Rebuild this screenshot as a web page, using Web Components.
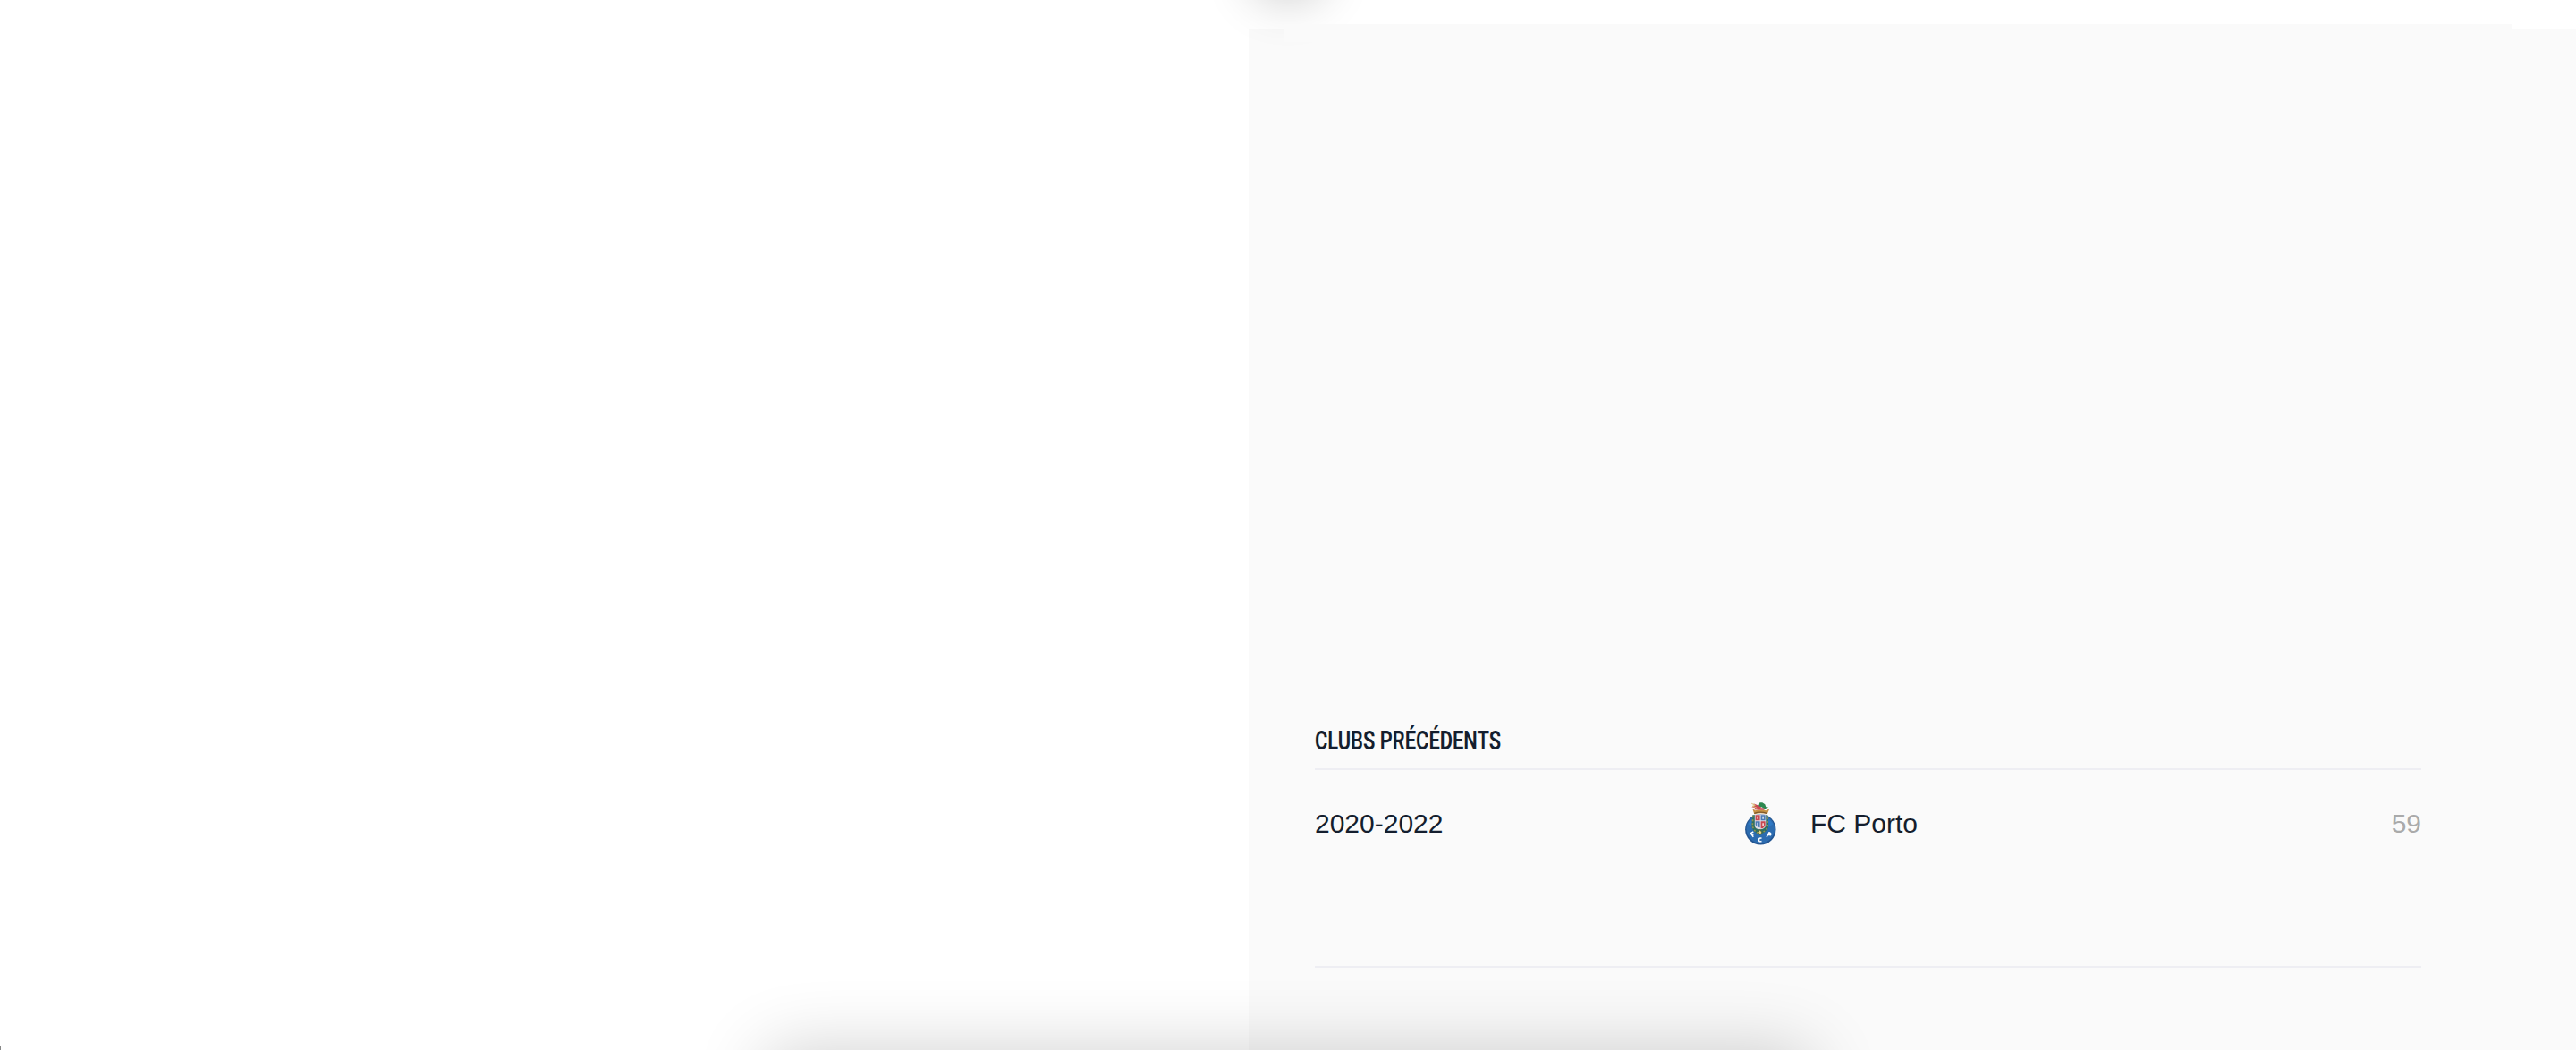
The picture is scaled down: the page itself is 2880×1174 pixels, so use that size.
<!DOCTYPE html>
<html lang="fr"><head><meta charset="utf-8"><title>Clubs précédents</title>
<style>html,body{margin:0;background:#fff}body{width:2880px;height:1174px;overflow:hidden}</style></head><body>
<player-page></player-page>
<script>
const define=(name,html)=>customElements.define(name,class extends HTMLElement{
 constructor(){super();this.attachShadow({mode:'open'}).innerHTML=html;}
});
define('club-crest',`<style>:host{display:block;width:36px;height:49px}svg{display:block}</style>
<svg width="36" height="49" viewBox="0.7 0.7 36 49">
<circle cx="18" cy="31" r="17.200" fill="#235592"/><circle cx="18" cy="30.500" r="15.800" fill="#2c6cb0"/>
<path d="M4 25Q9 17 18 16Q27 17 32 25Q26 30 18 31Q10 30 4 25" fill="#2e78c4"/>
<path d="M9 15L8 27Q8 33 17 37Q27 33 27 27L26 15Z" fill="#2f6f62"/>
<path d="M9.500 16L9 27Q10 33 17 36Q25 33 26 27L25.500 16" fill="none" stroke="#93924d" stroke-width="1.600" stroke-dasharray="2 2"/>
<path d="M11.500 14H24V27Q22 31 17.700 31Q12 31 11.500 27Z" fill="#dddce6"/>
<path d="M12.300 15h5v6h-5zM18.300 22h5v5q-2 3-5 3z" fill="#c94750"/>
<path d="M18.300 15h5v6h-5zM12.300 22h5v7q-4-1-5-3z" fill="#4a79b4"/>
<path d="M14 16.500h1.700v3H14zM20 24h1.700v3H20z" fill="#f0cfcf"/><path d="M20.800 16.500v3M14.800 23.500v4" stroke="#dfeaf4" stroke-width="1.500"/>
<path d="M9 8L12 10Q18 8 24 10L28 8L25.500 14Q18 12 11 14Z" fill="#c89243"/>
<path d="M11 13Q18 10.500 25 13" fill="none" stroke="#7e5a2e" stroke-width="1.300"/>
<path d="M8 6L12 4.500L10 2L15 4L20 4L18 7L23 7L22 9.500L10 9L12 7Z" fill="#cb4855"/>
<path d="M16 5L17 1L20 1L23 3L24 6L27 6L23 8L19 6Z" fill="#2e8850"/><path d="M8 2l4 2-3 1 5 2" fill="none" stroke="#d8bc72"/>
<path d="M17.500 31l2 3.500-2 3-2-3z" fill="#e5d58e" stroke="#4e663d"/>
<path d="M10 39.500L7 35.500L10 33.500M8.300 37.300l2.300-1.300" fill="none" stroke="#fff" stroke-width="1.500"/>
<path d="M19.200 41q-3-1-3 1.700t3 1.500" fill="none" stroke="#fff" stroke-width="1.500"/>
<path d="M24.800 39.500l2.800-5q3 1 1.500 3l-2.800-.5" fill="none" stroke="#fff" stroke-width="1.500"/>
</svg>`);
define('section-title',`<style>:host{display:block;height:53px;padding-top:5px;box-sizing:border-box}h2{margin:0;font:600 29.500px/35px Roboto,sans-serif;width:max-content;transform:scaleX(.742);transform-origin:left}</style><h2><slot></slot></h2>`);
define('club-row',`<style>:host{display:grid;grid-template-columns:481px 73px 1fr auto;height:223px;align-items:start;border-top:2px solid #eeeef3;border-bottom:2px solid #eeeef3;box-sizing:border-box;font:30px/34px "Liberation Sans",sans-serif}
.text{padding-top:43px}.crest{padding-top:36px}.apps{color:#aaa}</style>
<span class="text"><slot name="years"></slot></span><span class="crest"><slot name="crest"></slot></span><span class="text"><slot></slot></span><span class="text apps"><slot name="apps"></slot></span>`);
define('club-panel',`<style>:host{display:block;box-sizing:border-box;width:1484px;margin-top:32px;height:1142px;padding:774px 173px 0 74px;background:#fafafa;color:#141e2e}</style><slot></slot>`);
define('soft-shadow',`<style>:host{position:absolute;pointer-events:none}
:host([top]){left:1400px;top:-80px;width:80px;height:80px;border-radius:50%;box-shadow:0 0 56px rgba(0,0,0,.24)}
:host([bottom]){left:855px;top:1174px;width:1170px;height:180px;border-radius:20px;box-shadow:0 0 80px rgba(0,0,0,.19)}
:host([lip]){left:1435px;top:27px;width:1374px;height:20px;background:#fafafa}
:host([corner]){left:0;top:1170px;width:1px;height:4px;background:#888}</style>`);
define('player-page',`<style>:host{display:flex;position:relative;justify-content:flex-end;width:2880px;height:1174px;overflow:hidden;background:#fff}</style>
<club-panel><section-title>CLUBS PRÉCÉDENTS</section-title>
<club-row><span slot="years">2020-2022</span><club-crest slot="crest"></club-crest>FC Porto<span slot="apps">59</span></club-row></club-panel>
<soft-shadow top></soft-shadow><soft-shadow lip></soft-shadow><soft-shadow bottom></soft-shadow><soft-shadow corner></soft-shadow>`);
</script></body></html>
